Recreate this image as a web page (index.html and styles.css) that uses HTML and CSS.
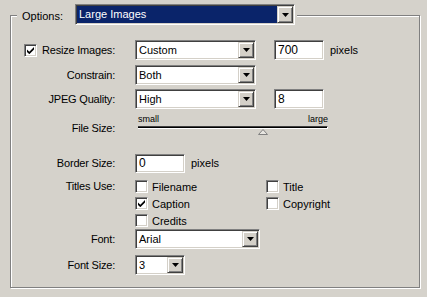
FILE: index.html
```html
<!DOCTYPE html>
<html lang="en">
<head>
    <meta charset="UTF-8">
    <title>Options</title>
    <link rel="stylesheet" href="styles.css">
</head>
<body>
    <div class="group">
        <div class="legend">
            <span class="legend-text">Options:</span>
            <div class="combo combo-options">
                <span class="combo-value selected">Large Images</span>
                <span class="combo-btn"><svg width="7" height="4" viewBox="0 0 7 4"><polygon points="0,0 7,0 3.5,4" fill="#000"/></svg></span>
            </div>
        </div>

        <div class="form">
            <div class="label">
                <span class="check"><svg width="7" height="7" viewBox="0 0 7 7"><polygon points="0,2.5 2.3,4.8 7,0 7,2.6 2.3,7.2 0,5" fill="#000"/></svg></span>
                Resize Images:
            </div>
            <div class="field">
                <div class="combo combo-md">
                    <span class="combo-value">Custom</span>
                    <span class="combo-btn"><svg width="7" height="4" viewBox="0 0 7 4"><polygon points="0,0 7,0 3.5,4" fill="#000"/></svg></span>
                </div>
                <input class="textbox textbox-side" type="text" value="700">
                <span class="unit">pixels</span>
            </div>

            <div class="label">Constrain:</div>
            <div class="field">
                <div class="combo combo-md">
                    <span class="combo-value">Both</span>
                    <span class="combo-btn"><svg width="7" height="4" viewBox="0 0 7 4"><polygon points="0,0 7,0 3.5,4" fill="#000"/></svg></span>
                </div>
            </div>

            <div class="label">JPEG Quality:</div>
            <div class="field">
                <div class="combo combo-md">
                    <span class="combo-value">High</span>
                    <span class="combo-btn"><svg width="7" height="4" viewBox="0 0 7 4"><polygon points="0,0 7,0 3.5,4" fill="#000"/></svg></span>
                </div>
                <input class="textbox textbox-side" type="text" value="8">
            </div>

            <div class="label label-slider">File Size:</div>
            <div class="slider">
                <div class="slider-labels"><span>small</span><span>large</span></div>
                <div class="slider-track"></div>
                <svg class="slider-thumb" width="10" height="6" viewBox="0 0 10 6">
                    <polygon points="5,0.5 9.5,5.5 0.5,5.5" fill="#e8e6e1" stroke="#808080" stroke-width="1"/>
                </svg>
            </div>

            <div class="label">Border Size:</div>
            <div class="field">
                <input class="textbox" type="text" value="0">
                <span class="unit">pixels</span>
            </div>

            <div class="label label-top">Titles Use:</div>
            <div class="titles">
                <div class="opt"><span class="check"></span>Filename</div>
                <div class="opt"><span class="check"></span>Title</div>
                <div class="opt"><span class="check"><svg width="7" height="7" viewBox="0 0 7 7"><polygon points="0,2.5 2.3,4.8 7,0 7,2.6 2.3,7.2 0,5" fill="#000"/></svg></span>Caption</div>
                <div class="opt"><span class="check"></span>Copyright</div>
                <div class="opt"><span class="check"></span>Credits</div>
            </div>

            <div class="label">Font:</div>
            <div class="field">
                <div class="combo combo-lg">
                    <span class="combo-value">Arial</span>
                    <span class="combo-btn"><svg width="7" height="4" viewBox="0 0 7 4"><polygon points="0,0 7,0 3.5,4" fill="#000"/></svg></span>
                </div>
            </div>

            <div class="label">Font Size:</div>
            <div class="field">
                <div class="combo combo-sm">
                    <span class="combo-value">3</span>
                    <span class="combo-btn"><svg width="7" height="4" viewBox="0 0 7 4"><polygon points="0,0 7,0 3.5,4" fill="#000"/></svg></span>
                </div>
            </div>
        </div>
    </div>
</body>
</html>
```

FILE: styles.css
```css
:root {
    --face: #d5d2cb;
    --shadow: #808080;
    --dark: #404040;
    --light: #d4d0c8;
    --white: #ffffff;
    --select: #0a246a;
}

body {
    margin: 0;
    width: 427px;
    height: 297px;
    overflow: hidden;
    background-color: var(--face);
    font-family: "Liberation Sans", Arial, sans-serif;
    font-size: 11px;
    color: #000;
}

/* etched group box */
.group {
    position: relative;
    margin: 15px 0 0 10px;
    width: 410px;
    height: 273px;
    box-sizing: border-box;
    border: 1px solid var(--shadow);
    box-shadow: 1px 1px 0 var(--white), inset 1px 1px 0 var(--white);
}

.legend {
    position: absolute;
    top: -12px;
    left: 6px;
    display: flex;
    align-items: center;
    padding: 0 2px 0 5px;
    background-color: var(--face);
}

.legend-text {
    width: 53px;
    padding-top: 2px;
}

.form {
    display: grid;
    grid-template-columns: 104px 1fr;
    grid-template-rows: 24px 26px 22px 40px 26px 54px 18px 34px;
    column-gap: 20px;
    padding-top: 22px;
}

.label {
    display: flex;
    justify-content: flex-end;
    align-items: center;
    gap: 5px;
    white-space: nowrap;
    letter-spacing: -0.2px;
}

.label-slider {
    align-items: flex-start;
    padding-top: 12px;
}

.label-top {
    align-items: flex-start;
    padding-top: 4px;
}

.field {
    display: flex;
    align-items: center;
}

/* sunken controls */
.combo,
.textbox,
.check {
    box-sizing: border-box;
    border: 1px solid;
    border-color: var(--shadow) var(--white) var(--white) var(--shadow);
    box-shadow: inset 1px 1px 0 var(--dark), inset -1px -1px 0 var(--light);
    background-color: var(--white);
}

.combo {
    display: flex;
    height: 20px;
    padding: 1px;
}

.combo-options {
    width: 220px;
    height: 21px;
}

.combo-md { width: 121px; }
.combo-lg { width: 125px; }
.combo-sm { width: 50px; }

.combo-value {
    flex: 1;
    padding-left: 2px;
    line-height: 16px;
    white-space: nowrap;
}

.combo-value.selected {
    background-color: var(--select);
    color: var(--white);
    line-height: 17px;
}

.combo-btn {
    width: 16px;
    box-sizing: border-box;
    display: flex;
    align-items: center;
    justify-content: center;
    background-color: var(--light);
    border: 1px solid;
    border-color: var(--light) var(--dark) var(--dark) var(--light);
    box-shadow: inset 1px 1px 0 var(--white), inset -1px -1px 0 var(--shadow);
}

.textbox {
    width: 50px;
    height: 19px;
    margin: 0;
    padding: 0 3px;
    font-family: inherit;
    font-size: 12px;
    color: #000;
    outline: none;
}

.textbox-side {
    margin-left: 18px;
    height: 20px;
}

.unit {
    margin-left: 6px;
}

/* trackbar */
.slider {
    position: relative;
    width: 190px;
    margin-left: 3px;
    padding-top: 4px;
}

.slider-labels {
    display: flex;
    justify-content: space-between;
    font-size: 9px;
    line-height: 10px;
}

.slider-track {
    margin-top: 2px;
    height: 1px;
    background-color: #000;
    border-top: 1px solid var(--dark);
    border-bottom: 1px solid var(--white);
    border-right: 1px solid var(--white);
}

.slider-thumb {
    position: absolute;
    left: 120px;
    top: 19px;
}

/* check boxes */
.check {
    flex: none;
    width: 13px;
    height: 13px;
    display: flex;
    align-items: center;
    justify-content: center;
}

.titles {
    display: grid;
    grid-template-columns: 131px 1fr;
    grid-auto-rows: 17px;
    padding-top: 2px;
}

.opt {
    display: flex;
    align-items: center;
    gap: 4px;
}
```
